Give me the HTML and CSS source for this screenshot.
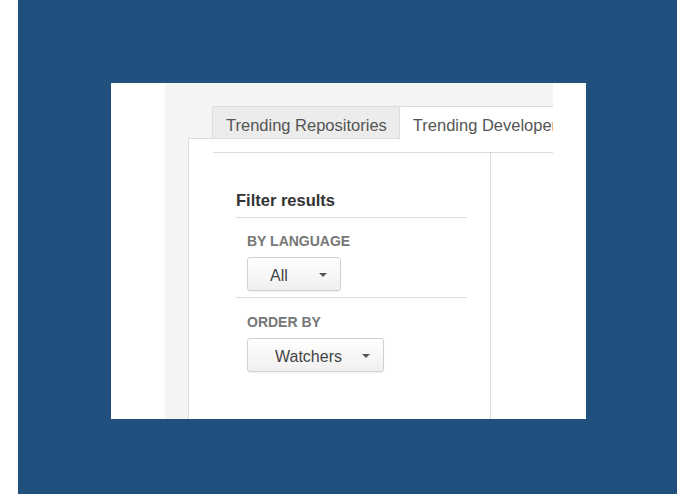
FILE: index.html
```html
<!DOCTYPE html>
<html lang="en">
<head>
  <meta charset="UTF-8" />
  <meta name="viewport" content="width=device-width, initial-scale=1" />
  <title>Trending - Filter results</title>
  <link rel="stylesheet" href="styles.css">
</head>
<body>

<div class="frame">
  <div class="shot">
    <div class="gutter"></div>

    <div class="page">
      <ul class="tabs">
        <li class="tab">Trending Repositories</li>
        <li class="tab active">Trending Developers</li>
      </ul>

      <div class="panel">
        <div class="panel-body">
          <aside class="filters">
            <h3>Filter results</h3>

            <div class="filter">
              <h4>By language</h4>
              <button class="select select-lang">All <span class="caret"></span></button>
            </div>

            <div class="filter last">
              <h4>Order by</h4>
              <button class="select select-order">Watchers <span class="caret"></span></button>
            </div>
          </aside>
          <div class="results"></div>
        </div>
      </div>
    </div>

    <div class="gutter-right"></div>
  </div>
</div>

</body>
</html>
```

FILE: styles.css
```css
* {
  margin: 0; padding: 0; box-sizing: border-box;
  font-family: 'Liberation Sans', Arial, sans-serif;
}
body {
  background: #fff;
  height: 494px;
  overflow: hidden;
}
.frame {
  margin: 0 18px;
  height: 494px;
  background: #21507f;
  padding: 83px 0 0 93px;
}
.shot {
  display: flex;
  width: 475px;
  height: 336px;
  background: #fff;
  overflow: hidden;
}
.gutter {
  width: 54px;
  flex-shrink: 0;
}
.gutter-right {
  width: 33px;
  flex-shrink: 0;
}
.page {
  width: 388px;
  flex-shrink: 0;
  background: #f4f4f4;
  padding-top: 23px;
  overflow: hidden;
}

/* tabs */
.tabs {
  list-style: none;
  display: flex;
  align-items: flex-start;
  margin: 0 0 -1px 47px;
  position: relative;
  z-index: 1;
}
.tab {
  flex-shrink: 0;
  white-space: nowrap;
  font-size: 16.5px;
  line-height: 20px;
  color: #555;
  background: #ececec;
  border: 1px solid #dcdcdc;
  border-bottom: 0;
  border-radius: 2px 2px 0 0;
  padding: 8px 12px 3px 13px;
}
.tab.active {
  background: #fff;
  border-left: 0;
  padding-bottom: 4px;
}

/* panel */
.panel {
  margin-left: 23px;
  width: 520px;
  height: 320px;
  background: #fff;
  border: 1px solid #dcdcdc;
  padding: 13px 0 0 24px;
}
.panel-body {
  display: flex;
  border-top: 1px solid #dcdcdc;
  height: 100%;
}
.filters {
  width: 278px;
  flex-shrink: 0;
  border-right: 1px solid #dcdcdc;
  padding: 37px 23px 0;
}
.filters h3 {
  font-size: 16.5px;
  line-height: 20px;
  font-weight: bold;
  color: #333;
  padding-bottom: 7px;
  border-bottom: 1px solid #dcdcdc;
}
.filter {
  padding: 14px 0 6px 11px;
  border-bottom: 1px solid #dcdcdc;
}
.filter.last {
  padding-top: 15px;
  border-bottom: 0;
}
.filter h4 {
  font-size: 14px;
  line-height: 18px;
  font-weight: bold;
  color: #777;
  text-transform: uppercase;
  margin-bottom: 7px;
}

/* dropdown buttons */
.select {
  display: flex;
  align-items: center;
  height: 34px;
  font-size: 16px;
  line-height: 29px;
  color: #444;
  background: linear-gradient(#fff, #f0f0f0);
  border: 1px solid #d0d0d0;
  border-radius: 3px;
  box-shadow: 0 1px 1px rgba(0,0,0,0.06);
  padding: 3px 13px 0 22px;
  cursor: pointer;
}
.select-lang {
  width: 94px;
}
.select-order {
  width: 137px;
  padding-left: 27px;
}
.caret {
  margin-left: auto;
  width: 0;
  height: 0;
  border-left: 4px solid transparent;
  border-right: 4px solid transparent;
  border-top: 4px solid #555;
  margin-top: -2px;
}
.results {
  flex: 1;
}
```
